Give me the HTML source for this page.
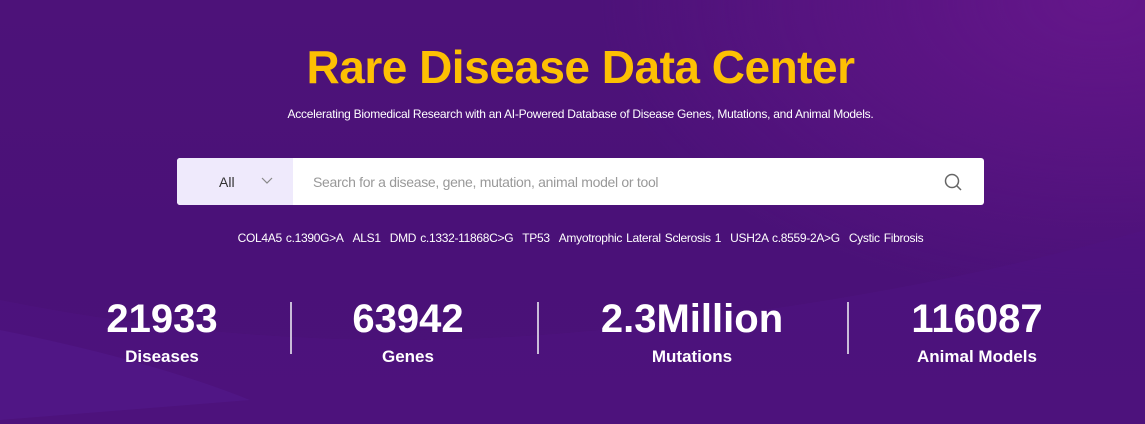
<!DOCTYPE html>
<html><head><style>
*{margin:0;padding:0;box-sizing:border-box}
body{width:1145px;height:424px;overflow:hidden;font-family:"Liberation Sans",sans-serif;
background:radial-gradient(ellipse 500px 300px at 1100px 0,#64168a,transparent),linear-gradient(180deg,#4d1279 0%,#4a1178 60%,#4b1277 100%);position:relative;color:#fff}
.c{position:absolute;left:8px;width:1145px;text-align:center;white-space:nowrap}
h1{position:absolute;top:40px;left:8px;width:1145px;text-align:center;font-size:46px;color:#fdc003;font-weight:bold;letter-spacing:-0.5px}
.sub{top:107px;font-size:12px;letter-spacing:-0.25px}
.box{position:absolute;left:177px;top:158px;width:807px;height:47px;background:#fff;border-radius:3px;overflow:hidden}
.sel{position:absolute;left:0;top:0;width:116px;height:47px;background:#efeafc;font-size:14px;color:#333}
.sel span{position:absolute;left:42px;top:16px}
.ph{position:absolute;left:136px;top:16px;font-size:14px;color:#999;letter-spacing:-0.3px}
.tags{top:231px;font-size:12px;letter-spacing:-0.3px;word-spacing:1px}
.tags b{font-weight:normal;margin:0 4.5px}
.st{position:absolute;top:296px;text-align:center;width:240px;font-weight:bold}
.st .n{font-size:40px;line-height:46px}
.st .l{font-size:17px;margin-top:5px}
.bar{position:absolute;top:302px;width:2px;height:52px;background:#c9bcd8}
</style></head><body>
<svg style="position:absolute;left:0;top:0" width="1145" height="424">
<path d="M0 300 Q300 360 600 330 T1145 230 L1145 424 L0 424Z" fill="#4f1384" opacity=".4"/>
<path d="M0 330 Q150 360 250 400 L0 420Z" fill="#5a24a0" opacity=".25"/>
</svg>
<h1>Rare Disease Data Center</h1>
<div class="c sub">Accelerating Biomedical Research with an AI-Powered Database of Disease Genes, Mutations, and Animal Models.</div>
<div class="box">
<div class="sel"><span>All</span>
<svg style="position:absolute;left:84px;top:19px" width="12" height="8"><path d="M1 1L6 6L11 1" stroke="#888" fill="none" stroke-width="1.2"/></svg></div>
<div class="ph">Search for a disease, gene, mutation, animal model or tool</div>
<svg style="position:absolute;left:767px;top:15px" width="18" height="18"><circle cx="8" cy="8" r="6.5" stroke="#666" stroke-width="1.5" fill="none"/><path d="M12.5 12.5L17 17" stroke="#666" stroke-width="1.5"/></svg>
</div>
<div class="c tags"><b>COL4A5 c.1390G&gt;A</b><b>ALS1</b><b>DMD c.1332-11868C&gt;G</b><b>TP53</b><b>Amyotrophic Lateral Sclerosis 1</b><b>USH2A c.8559-2A&gt;G</b><b>Cystic Fibrosis</b></div>
<div class="st" style="left:42px"><div class="n">21933</div><div class="l">Diseases</div></div>
<div class="bar" style="left:290px"></div>
<div class="st" style="left:288px"><div class="n">63942</div><div class="l">Genes</div></div>
<div class="bar" style="left:537px"></div>
<div class="st" style="left:572px"><div class="n">2.3Million</div><div class="l">Mutations</div></div>
<div class="bar" style="left:847px"></div>
<div class="st" style="left:857px"><div class="n">116087</div><div class="l">Animal Models</div></div>
</body></html>
